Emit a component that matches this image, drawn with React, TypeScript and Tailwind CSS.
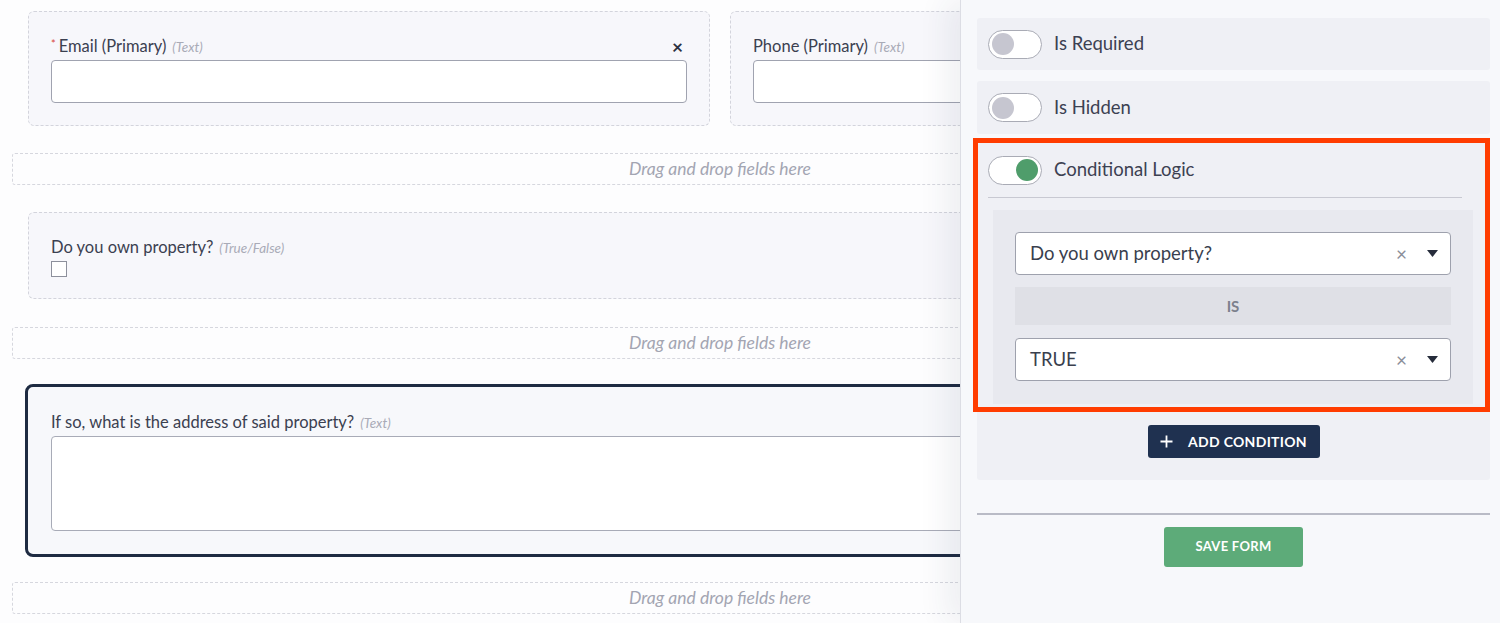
import React from "react";

const font = { fontFamily: "Lato, 'Open Sans', sans-serif" };

function DropZone({ className = "" }: { className?: string }) {
  return (
    <div
      className={`flex h-[32px] w-[1416px] items-center justify-center rounded-[3px] border border-dashed border-[#d6d7de] text-[17.5px] italic text-[#a3a5b2] ${className}`}
    >
      Drag and drop fields here
    </div>
  );
}

function Toggle({ on }: { on?: boolean }) {
  return (
    <div
      className={`flex h-[29px] w-[54px] shrink-0 items-center rounded-full border-[1.5px] border-[#a9abb5] bg-white px-[3px] ${
        on ? "justify-end" : "justify-start"
      }`}
    >
      <div className={`h-[22px] w-[22px] rounded-full ${on ? "bg-[#4f9d6b]" : "bg-[#c6c6d0]"}`} />
    </div>
  );
}

function Caret() {
  return (
    <svg width="11" height="7" viewBox="0 0 11 7">
      <path d="M0 0 L11 0 L5.5 7 Z" fill="#262c3b" />
    </svg>
  );
}

function SelectBox({ value }: { value: string }) {
  return (
    <div className="flex h-[43px] items-center rounded-[4px] border-[1.5px] border-[#9ea1ad] bg-white pl-[14px] pr-[12px]">
      <span className="flex-1 text-[18.5px] text-[#3a3f4e]">{value}</span>
      <span className="mr-[20px] text-[19px] leading-none text-[#8b8e9a]">×</span>
      <Caret />
    </div>
  );
}

function Label({ text, kind }: { text: string; kind: string }) {
  return (
    <div className="flex items-baseline">
      <span className="text-[16.5px] text-[#3b4050]">{text}</span>
      <span className="ml-[6px] text-[13.5px] italic text-[#a9abb7]">{kind}</span>
    </div>
  );
}

export default function App() {
  return (
    <div className="flex h-[623px] w-[1500px] overflow-hidden bg-[#fdfdfe]" style={font}>
      <main className="h-full w-[960px] shrink-0 overflow-hidden bg-[#fdfdfe]">
        <div className="w-[1440px] pl-3 pt-[11px]">
          <div className="ml-4 flex gap-5">
            <div className="h-[115px] w-[682px] rounded-[6px] border border-dashed border-[#d3d4dc] bg-[#f7f7fb] px-[22px] pt-[23px]">
              <div className="flex h-[22px] items-center justify-between pr-[4px]">
                <div className="flex items-baseline">
                  <span className="relative -top-[4px] mr-[3px] text-[11px] text-[#d8453c]">*</span>
                  <Label text="Email (Primary)" kind="(Text)" />
                </div>
                <span className="text-[19px] font-bold leading-none text-[#2b3040]">×</span>
              </div>
              <div className="mt-[3px] h-[43px] rounded-[4px] border-[1.5px] border-[#a0a3b0] bg-white" />
            </div>
            <div className="h-[115px] w-[682px] rounded-[6px] border border-dashed border-[#d3d4dc] bg-[#f7f7fb] px-[22px] pt-[23px]">
              <div className="flex h-[22px] items-center">
                <Label text="Phone (Primary)" kind="(Text)" />
              </div>
              <div className="mt-[3px] h-[43px] rounded-[4px] border-[1.5px] border-[#a0a3b0] bg-white" />
            </div>
          </div>

          <DropZone className="mt-[27px]" />

          <div className="ml-4 mt-[27px] h-[87px] w-[1384px] rounded-[6px] border border-dashed border-[#d3d4dc] bg-[#f7f7fb] px-[22px] pt-[23px]">
            <div className="flex h-[22px] items-center">
              <Label text="Do you own property?" kind="(True/False)" />
            </div>
            <div className="mt-[3px] h-[16px] w-[16px] border-[1.5px] border-[#8d909c] bg-white" />
          </div>

          <DropZone className="mt-[28px]" />

          <div className="ml-[13px] mt-[25px] h-[173px] w-[1390px] rounded-[8px] border-[3px] border-[#1e2b42] bg-[#f7f8fb] pl-[23px] pr-[22px] pt-[24px]">
            <div className="flex h-[22px] items-center">
              <Label text="If so, what is the address of said property?" kind="(Text)" />
            </div>
            <div className="mt-[3px] h-[95px] rounded-[4px] border-[1.5px] border-[#a8abb7] bg-white" />
          </div>

          <DropZone className="mt-[25px]" />
        </div>
      </main>

      <aside className="relative z-10 h-full w-[540px] shrink-0 border-l border-[#dcdde4] bg-[#f7f8fb] pl-4 pr-[10px] pt-[18px] shadow-[-14px_0_28px_rgba(40,50,90,0.07)]">
        <div className="flex h-[52px] items-center gap-3 rounded-[3px] bg-[#eff0f5] pl-[11px]">
          <Toggle />
          <span className="text-[18.5px] text-[#3c4152]">Is Required</span>
        </div>
        <div className="mt-[11px] flex h-[53px] items-center gap-3 rounded-[3px] bg-[#eff0f5] pl-[11px]">
          <Toggle />
          <span className="text-[18.5px] text-[#3c4152]">Is Hidden</span>
        </div>

        <div className="mt-[9px] rounded-[3px] bg-[#eff0f5] pb-[22px]">
          <div className="flex h-[54px] items-center gap-3 pl-[11px]">
            <Toggle on />
            <span className="text-[18.5px] text-[#3c4152]">Conditional Logic</span>
          </div>
          <div className="ml-[11px] mr-[28px] border-t border-[#c8c9d2]" />
          <div className="ml-4 mt-[12px] w-[480px] bg-[#e8e9ef] px-[22px] pb-[23px] pt-[22px]">
            <SelectBox value="Do you own property?" />
            <div className="mt-[12px] flex h-[38px] items-center justify-center bg-[#dfe0e6] text-[15px] font-bold text-[#7c808d]">
              IS
            </div>
            <div className="mt-[13px]">
              <SelectBox value="TRUE" />
            </div>
          </div>
          <div className="mt-[21px] flex justify-center">
            <button className="flex h-[33px] w-[172px] items-center justify-center gap-[15px] rounded-[3px] bg-[#1f3150] text-[14px] font-bold tracking-[0.3px] text-white">
              <svg width="13" height="13" viewBox="0 0 13 13">
                <path d="M6.5 0.5 V12.5 M0.5 6.5 H12.5" stroke="white" strokeWidth="1.8" />
              </svg>
              ADD CONDITION
            </button>
          </div>
        </div>

        <div className="mt-[33px] border-t-2 border-[#b9bbc6]" />
        <div className="mt-[12px] flex justify-center">
          <button className="flex h-[40px] w-[139px] items-center justify-center rounded-[3px] bg-[#5dab79] text-[13px] font-bold tracking-[0.3px] text-white">
            SAVE FORM
          </button>
        </div>

        <div className="pointer-events-none absolute left-[12px] top-[138px] h-[274px] w-[517px] border-[5px] border-[#ff3c00]" />
      </aside>
    </div>
  );
}
